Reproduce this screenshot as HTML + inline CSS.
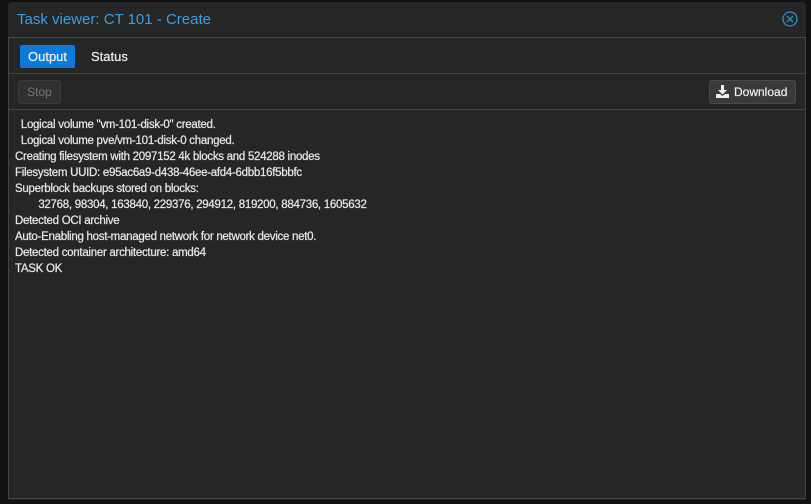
<!DOCTYPE html>
<html><head><style>
html,body{margin:0;padding:0;width:811px;height:504px;background:#111;overflow:hidden;font-family:"Liberation Sans",Arial,sans-serif;}
.win{position:absolute;left:8px;top:2px;width:798px;height:498px;background:#262626;border-radius:4px 4px 0 0;}
.title{position:absolute;left:9px;top:9px;font-size:15px;color:#3aa0e4;}
.close{position:absolute;right:8px;top:9px;width:16px;height:16px;}
.panel{position:absolute;left:0;top:35px;width:796px;height:460px;border:1px solid #444;background:#262626;}
.tabs{position:absolute;left:0;top:0;right:0;height:35px;border-bottom:1px solid #444;}
.tab{position:absolute;top:7px;height:23px;line-height:23px;font-size:13px;color:#f0f0f0;padding:0 8px;border-radius:2px;-webkit-text-stroke:0.2px #f0f0f0;}
.tb{position:absolute;left:0;top:36px;right:0;height:35px;border-bottom:1px solid #444;}
.btn{position:absolute;height:22px;line-height:22px;border:1px solid #4a4a4a;border-radius:3px;font-size:12px;background:#3a3a3a;color:#eee;}
.log{position:absolute;left:6px;top:79px;font-size:11.5px;line-height:16px;color:#e6e6e6;white-space:pre;letter-spacing:-0.28px;-webkit-text-stroke:0.25px #e6e6e6;}
</style></head><body>
<div class="win">
<div class="title">Task viewer: CT 101 - Create</div>
<svg class="close" viewBox="0 0 16 16"><circle cx="8" cy="8" r="7" fill="none" stroke="#2a8fd0" stroke-width="1.3"/><path d="M5 5L11 11M11 5L5 11" stroke="#2a8fd0" stroke-width="1.3"/></svg>
<div class="panel">
<div class="tabs">
<div class="tab" style="left:11px;background:#0c7ad8;">Output</div>
<div class="tab" style="left:74px;">Status</div>
</div>
<div class="tb">
<div class="btn" style="left:9px;top:6px;width:41px;text-align:center;background:#303030;color:#777;border-color:#3c3c3c;">Stop</div>
<div class="btn" style="right:9px;top:6px;width:85px;-webkit-text-stroke:0.2px #eee;">
<svg style="position:absolute;left:6px;top:4px" width="13" height="13" viewBox="0 0 13 13"><path d="M5 0h3v5h3L6.5 9.5 2 5h3z" fill="#eee"/><path d="M0 9h4l2.5 2 2.5-2h4v4H0z" fill="#eee"/></svg>
<span style="position:absolute;left:24px;">Download</span></div>
</div>
<div class="log">  Logical volume "vm-101-disk-0" created.
  Logical volume pve/vm-101-disk-0 changed.
Creating filesystem with 2097152 4k blocks and 524288 inodes
Filesystem UUID: e95ac6a9-d438-46ee-afd4-6dbb16f5bbfc
Superblock backups stored on blocks:
        32768, 98304, 163840, 229376, 294912, 819200, 884736, 1605632
Detected OCI archive
Auto-Enabling host-managed network for network device net0.
Detected container architecture: amd64
TASK OK</div>
</div>
</div>
</body></html>
